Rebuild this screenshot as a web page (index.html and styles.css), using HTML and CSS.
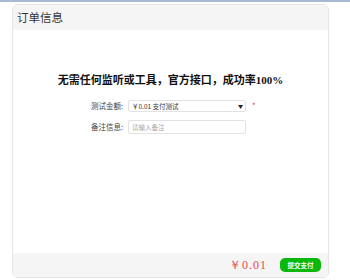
FILE: index.html
```html
<!DOCTYPE html>
<html>
<head>
    <title>订单信息</title>
    <link rel="stylesheet" href="styles.css">
</head>
<body>
    <div class="topbar"></div>
    <div class="panel">
        <div class="panel-head">订单信息</div>
        <div class="panel-body">
            <h1 class="slogan">无需任何监听或工具，官方接口，成功率100%</h1>
            <form id="orderForm" class="order-form">
                <div class="form-row">
                    <label for="amount">测试金额:</label>
                    <div class="select-wrap">
                        <select id="amount" name="amount">
                            <option value="0.01">￥0.01 支付测试</option>
                        </select>
                        <span class="arrow">▼</span>
                    </div>
                    <span class="required">*</span>
                </div>
                <div class="form-row">
                    <label for="remark">备注信息:</label>
                    <input type="text" id="remark" name="remark" placeholder="请输入备注">
                </div>
            </form>
        </div>
        <div class="panel-foot">
            <span class="price">￥0.01</span>
            <button type="submit" form="orderForm" class="pay-btn">提交支付</button>
        </div>
    </div>
</body>
</html>
```
FILE: styles.css
```css
body {
    font-family: "Noto Sans CJK SC", sans-serif;
    margin: 0;
    background: #fff;
    color: #333;
}
.topbar {
    height: 2px;
    background: #a9b9d2;
}
.panel {
    margin: 2px 0 0 12px;
    width: 315px;
    height: 272px;
    border: 1px solid #e4e4e4;
    border-radius: 6px;
    display: flex;
    flex-direction: column;
    overflow: hidden;
}
.panel-head {
    height: 25px;
    line-height: 25px;
    padding-left: 4px;
    font-size: 11.5px;
    color: #333;
    background: #f5f5f5;
}
.panel-body {
    flex: 1;
    padding-top: 43px;
}
.slogan {
    margin: 0 0 12px;
    text-align: center;
    font-family: "Liberation Serif", "Noto Sans CJK SC", serif;
    font-size: 11px;
    line-height: 14px;
    font-weight: bold;
    color: #111;
}
.order-form {
    display: flex;
    flex-direction: column;
    gap: 7px;
}
.form-row {
    height: 14px;
    display: flex;
    align-items: center;
    gap: 5px;
    line-height: 14px;
}
label {
    width: 110px;
    text-align: right;
    font-size: 7.5px;
    color: #444;
}
.select-wrap {
    position: relative;
    width: 118px;
    height: 12px;
    display: flex;
}
select, input {
    width: 118px;
    border: 1px solid #e2e2e2;
    border-radius: 2px;
    background: #fff;
    box-sizing: border-box;
    font-family: "Noto Sans CJK SC", sans-serif;
    font-size: 6.5px;
    padding: 0 3px;
    outline: none;
}
select {
    height: 12px;
    appearance: none;
    color: #333;
}
.arrow {
    position: absolute;
    right: 3px;
    top: 0;
    font-size: 5px;
    line-height: 12px;
    color: #222;
}
input {
    height: 14px;
}
input::placeholder {
    color: #aaa;
}
.required {
    color: #e5484d;
    font-size: 8px;
    margin-left: 1px;
}
.panel-foot {
    height: 24px;
    background: #f5f5f5;
    display: flex;
    align-items: center;
    justify-content: flex-end;
    gap: 13px;
    padding-right: 7px;
}
.price {
    font-family: "Liberation Serif", serif;
    font-size: 12px;
    letter-spacing: 1px;
    color: #e5484d;
}
.pay-btn {
    width: 41px;
    height: 14px;
    padding: 0;
    border: none;
    border-radius: 5px;
    background: #09b80a;
    color: #fff;
    font-family: "Noto Sans CJK SC", sans-serif;
    font-size: 6.5px;
    font-weight: bold;
    cursor: pointer;
}
```
